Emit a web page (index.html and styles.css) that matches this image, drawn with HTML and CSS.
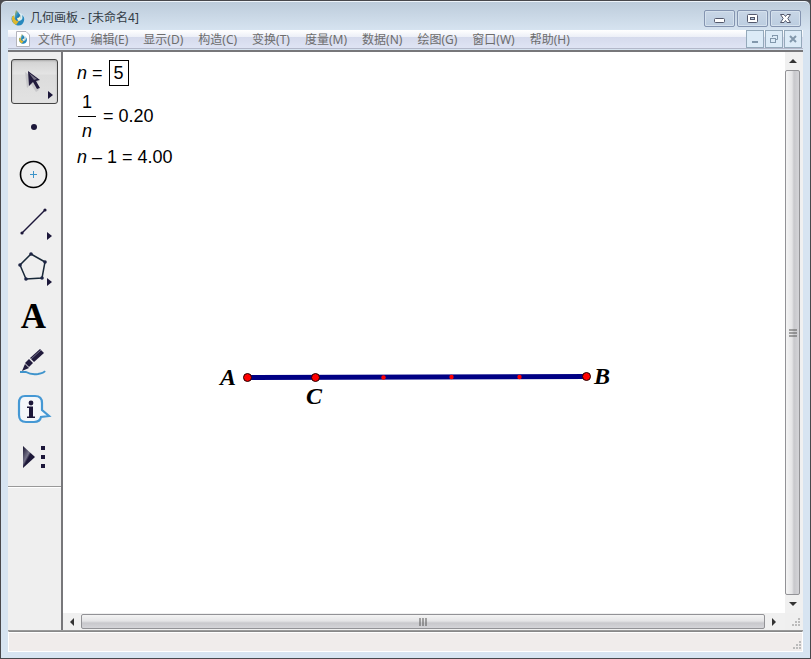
FILE: index.html
```
<!DOCTYPE html>
<html lang="zh-CN">
<head>
    <meta charset="UTF-8">
    <meta name="viewport" content="width=device-width, initial-scale=1.0">
    <title>几何画板 - [未命名4]</title>
    <link rel="stylesheet" href="styles.css">
</head>
<body>
    <svg class="defs" width="0" height="0" aria-hidden="true">
        <defs>
            <linearGradient id="drop" x1="0" y1="0" x2="1" y2="1">
                <stop offset="0" stop-color="#e8c43c"/>
                <stop offset="0.45" stop-color="#2a8fc4"/>
                <stop offset="1" stop-color="#0c4a80"/>
            </linearGradient>
            <linearGradient id="play" x1="0" y1="0" x2="1" y2="1">
                <stop offset="0" stop-color="#16122e"/>
                <stop offset="0.4" stop-color="#77758a"/>
                <stop offset="0.5" stop-color="#1d1838"/>
            </linearGradient>
            <symbol id="logo" viewBox="0 0 16 16">
                <circle cx="8" cy="9" r="6.5" fill="#d6ebf4"/>
                <path d="M2 6Q0 12 6 15Q12 17 14 11Q15 7 12 5Q14 10 9 11Z" fill="#2688bd"/>
                <path d="M2 7Q1 12 6 15L9 11Q5 12 4 5Z" fill="#deb82f"/>
                <path d="M6 0Q12 5 10 9Q8 12 5 9Q4 6 6 0Z" fill="url(#drop)"/>
                <path d="M7 8Q10 8 10 5Q12 9 8 11Z" fill="#fff9c8"/>
            </symbol>
        </defs>
    </svg>

    <div class="window">
        <header class="titlebar">
            <svg class="logo" width="16" height="18"><use href="#logo" width="16" height="18"/></svg>
            <h1>几何画板 - [未命名4]</h1>
            <div class="window-buttons">
                <button type="button" aria-label="最小化">
                    <svg width="14" height="12"><rect x="1.5" y="6.5" width="10" height="4" rx="1" fill="#fff" stroke="#53586c"/></svg>
                </button>
                <button type="button" aria-label="最大化">
                    <svg width="14" height="12"><rect x="1.5" y="2.5" width="10" height="8" rx="1" fill="#fff" stroke="#53586c"/><rect x="4.5" y="5.5" width="4" height="2" fill="#b9cbe0" stroke="#53586c"/></svg>
                </button>
                <button type="button" aria-label="关闭">
                    <svg width="14" height="12"><path d="M1.5 2.5H5L6.5 4.5L8 2.5H11.5L8.8 6.5L11.5 10.5H8L6.5 8.5L5 10.5H1.5L4.2 6.5Z" fill="#fff" stroke="#53586c"/></svg>
                </button>
            </div>
        </header>

        <div class="menubar">
            <svg class="doc-icon" width="14" height="16">
                <path d="M0.5 0.5H10L13.5 4V15.5H0.5Z" fill="#fff" stroke="#b4b4bc"/>
                <use href="#logo" x="2" y="3" width="10" height="10"/>
            </svg>
            <nav>
                <button type="button">文件(F)</button>
                <button type="button">编辑(E)</button>
                <button type="button">显示(D)</button>
                <button type="button">构造(C)</button>
                <button type="button">变换(T)</button>
                <button type="button">度量(M)</button>
                <button type="button">数据(N)</button>
                <button type="button">绘图(G)</button>
                <button type="button">窗口(W)</button>
                <button type="button">帮助(H)</button>
            </nav>
            <div class="doc-buttons">
                <button type="button" aria-label="最小化文档">
                    <svg width="10" height="10"><path d="M2 8H8" stroke="#8298ac" stroke-width="2"/></svg>
                </button>
                <button type="button" aria-label="还原文档">
                    <svg width="10" height="10" fill="none" stroke="#8298ac"><path d="M3.5 3V1.5H8.5V5.5H7M3 1.5H9M1 4.5H7"/><rect x="1.5" y="4.5" width="5" height="4"/></svg>
                </button>
                <button type="button" aria-label="关闭文档">
                    <svg width="10" height="10"><path d="M2 2L8 8M8 2L2 8" stroke="#8298ac" stroke-width="2"/></svg>
                </button>
            </div>
        </div>

        <main>
            <aside class="toolbox">
                <div class="tools">
                    <button type="button" class="tool active" aria-label="移动箭头工具">
                        <svg width="45" height="43">
                            <path d="M13 12L15 28L19 24L24 32L27 30L23 23L27 22Z" fill="#b5b5ba" opacity="0.6"/>
                            <path d="M16 11L17 26L21 22L25 29L28 28L24 21L28 20Z" fill="#211b3c"/>
                            <path d="M17 13L25 19L22 20Z" fill="#777486"/>
                            <path d="M36 31L41 35L36 39Z" fill="#1c173a"/>
                        </svg>
                    </button>
                    <button type="button" class="tool" aria-label="点工具">
                        <svg width="47" height="45"><circle cx="23" cy="21" r="3" fill="#1c173a"/></svg>
                    </button>
                    <button type="button" class="tool" aria-label="圆工具">
                        <svg width="47" height="45"><circle cx="22.5" cy="21.5" r="13" fill="none" stroke="#000" stroke-width="1.6"/><path d="M19 21.5H26M22.5 18V25" stroke="#3d94c8"/></svg>
                    </button>
                    <button type="button" class="tool" aria-label="线段直尺工具">
                        <svg width="47" height="45"><path d="M11 33L34 10" stroke="#1c173a" stroke-width="1.5"/><circle cx="11" cy="33" r="1.6" fill="#1c173a"/><circle cx="34" cy="10" r="1.6" fill="#1c173a"/><path d="M36 32L41 36L36 40Z" fill="#1c173a"/></svg>
                    </button>
                    <button type="button" class="tool" aria-label="多边形工具">
                        <svg width="47" height="45">
                            <path d="M20 7L34 15L31 31L15 32L9 18Z" fill="none" stroke="#182838" stroke-width="1.5"/>
                            <g fill="#1c2444"><circle cx="20" cy="7" r="1.8"/><circle cx="34" cy="15" r="1.8"/><circle cx="31" cy="31" r="1.8"/><circle cx="15" cy="32" r="1.8"/><circle cx="9" cy="18" r="1.8"/></g>
                            <path d="M36 31L41 35L36 39Z" fill="#1c173a"/>
                        </svg>
                    </button>
                    <button type="button" class="tool letter">A</button>
                    <button type="button" class="tool" aria-label="标记工具">
                        <svg width="47" height="45">
                            <path d="M9 31H15Q20 34 27 33Q33 32 34 30" fill="none" stroke="#3f94cc" stroke-width="1.8"/>
                            <path d="M11 30L14 23L18 27Z" fill="#211b3c"/>
                            <path d="M14 22L18 18L22 22L18 26Z" fill="#211b3c"/>
                            <path d="M19 17L29 8L33 12L23 21Z" fill="#211b3c"/>
                            <path d="M20 18L30 9" stroke="#716e88"/>
                        </svg>
                    </button>
                    <button type="button" class="tool" aria-label="信息工具">
                        <svg width="47" height="45">
                            <path d="M14 8H24Q31 8 31 15V22L38 28L30 29Q29 34 23 34H15Q8 34 8 27V15Q8 8 14 8Z" fill="#f4f7fa" stroke="#4598d4" stroke-width="2.2"/>
                            <circle cx="20" cy="15" r="2.4" fill="#1c173a"/>
                            <path d="M16 18.5H22V28.500H24V30H16V28.5H18V20H16Z" fill="#1c173a"/>
                        </svg>
                    </button>
                    <button type="button" class="tool" aria-label="自定义工具">
                        <svg width="47" height="45"><path d="M12 11L24 22L12 33Z" fill="url(#play)"/><path d="M30 11h4v4h-4ZM30 20h4v4h-4ZM30 29h4v4h-4Z" fill="#1c173a"/></svg>
                    </button>
                </div>
            </aside>

            <div class="view">
                <section class="sketch">
                    <div class="measures">
                        <div class="measure">
                            <label for="param"><i>n</i> =</label>
                            <input id="param" type="text" value="5">
                        </div>
                        <div class="measure ratio">
                            <span class="fraction"><span>1</span><i>n</i></span>
                            <span>= 0.20</span>
                        </div>
                        <div class="measure"><span><i>n</i> – 1 = 4.00</span></div>
                    </div>
                    <svg class="figure" width="400" height="60" role="img" aria-label="线段 AB">
                        <path d="M30 27.5L369 26.5" stroke="#000084" stroke-width="5"/>
                        <g fill="#f00">
                            <circle cx="165.5" cy="27.5" r="2.2"/>
                            <circle cx="233.5" cy="27" r="2.2"/>
                            <circle cx="301.5" cy="27" r="2.2"/>
                        </g>
                        <g fill="#f00" stroke="#200000">
                            <circle cx="29.5" cy="27.5" r="4"/>
                            <circle cx="97.5" cy="27.5" r="4"/>
                            <circle cx="368.5" cy="26.5" r="4"/>
                        </g>
                        <text x="2" y="35">A</text>
                        <text x="88" y="54">C</text>
                        <text x="376" y="34">B</text>
                    </svg>
                </section>

                <div class="scrollbar vertical">
                    <button type="button" aria-label="向上滚动"><svg width="8" height="4"><path d="M0 4L4 0L8 4Z" fill="#333"/></svg></button>
                    <div class="thumb"><svg width="8" height="8"><path d="M0 1H8M0 4H8M0 7H8" stroke="#555"/></svg></div>
                    <button type="button" aria-label="向下滚动"><svg width="8" height="4"><path d="M0 0L4 4L8 0Z" fill="#333"/></svg></button>
                </div>
                <div class="scrollbar horizontal">
                    <button type="button" aria-label="向左滚动"><svg width="4" height="8"><path d="M4 0L0 4L4 8Z" fill="#333"/></svg></button>
                    <div class="thumb"><svg width="8" height="8"><path d="M1 0V8M4 0V8M7 0V8" stroke="#555"/></svg></div>
                    <button type="button" aria-label="向右滚动"><svg width="4" height="8"><path d="M0 0L4 4L0 8Z" fill="#333"/></svg></button>
                </div>
                <div class="corner">
                    <svg class="grip" width="10" height="10"><path d="M7 0h2v2h-2ZM4 3h2v2h-2ZM7 3h2v2h-2ZM1 6h2v2h-2ZM4 6h2v2h-2ZM7 6h2v2h-2Z" fill="#bbb"/></svg>
                </div>
            </div>
        </main>

        <footer class="statusbar">
            <svg class="grip" width="10" height="10"><path d="M7 0h2v2h-2ZM4 3h2v2h-2ZM7 3h2v2h-2ZM1 6h2v2h-2ZM4 6h2v2h-2ZM7 6h2v2h-2Z" fill="#bbb"/></svg>
        </footer>
    </div>
</body>
</html>
```
FILE: styles.css
```
* {
    box-sizing: border-box;
}
body {
    margin: 0;
    background-color: #4b4b4f;
    font-family: "Noto Sans", "Noto Sans CJK SC", sans-serif;
    font-size: 12px;
}
button {
    margin: 0;
    padding: 0;
    border: 0;
    background: none;
    font: inherit;
    color: inherit;
}
svg {
    display: block;
    flex: none;
}
.defs {
    position: absolute;
}
.window {
    display: flex;
    flex-direction: column;
    height: 100vh;
    padding: 0 7px 6px;
    border: 1px solid #48484c;
    border-radius: 6px 6px 0 0;
    background: linear-gradient(#bccbda, #d7e4f1 30px);
    box-shadow: inset 0 1px #eef4fa;
}

/* Title bar */
.titlebar {
    display: flex;
    flex: none;
    align-items: center;
    height: 29px;
    padding: 5px 2px 0;
}
.titlebar h1 {
    flex: 1;
    margin: 0 4px;
    font-size: 12px;
    font-weight: normal;
    line-height: 18px;
    color: #333b44;
}
.window-buttons {
    display: flex;
    gap: 2px;
}
.window-buttons button {
    display: flex;
    align-items: center;
    justify-content: center;
    width: 31px;
    height: 17px;
    border: 1px solid #8494b0;
    border-radius: 2px;
    background: linear-gradient(#c8d6e6, #bccde0);
    box-shadow: inset 0 0 0 1px #d5e1ed;
}

/* Menu bar */
.menubar {
    display: flex;
    flex: none;
    align-items: center;
    height: 19px;
    padding: 0 1px 0 8px;
    border-bottom: 1px solid #b3b8ca;
    background: linear-gradient(#fff, #eceff7 7px, #d5daec 7px, #dfe4f4);
    color: #6d6d6d;
}
.menubar nav {
    display: flex;
    flex: 1;
    gap: 15px;
    padding: 1px 0 0 8px;
}
.menubar nav button {
    line-height: 18px;
    white-space: nowrap;
}
.doc-buttons {
    display: flex;
    gap: 1px;
}
.doc-buttons button {
    display: flex;
    align-items: center;
    justify-content: center;
    width: 18px;
    height: 18px;
    border: 1px solid #94a9ba;
    background-color: #dcebf7;
}

/* Work area */
main {
    display: flex;
    flex: 1;
    min-height: 0;
    margin-top: 1px;
    border-top: 2px solid #77777a;
    border-bottom: 1px solid #999;
    background-color: #efefef;
}
.toolbox {
    flex: none;
    width: 55px;
    border-right: 2px solid #77777a;
}
.tools {
    display: flex;
    flex-direction: column;
    gap: 2px;
    padding: 7px 3px 6px;
    border-bottom: 1px solid #999;
    box-shadow: 0 1px #fff;
}
.tool {
    display: flex;
    align-items: center;
    justify-content: center;
    width: 47px;
    height: 45px;
}
.tool.active {
    border: 1px solid #444;
    border-radius: 3px;
    background: linear-gradient(#d2d2d2, #e4e4e4 14px, #dcdcdc 15px, #e2e2e2);
    box-shadow: inset 0 1px 2px #aaa;
}
.tool.letter {
    padding-right: 2px;
    font-family: "Liberation Serif", serif;
    font-size: 35px;
    font-weight: bold;
    color: #000;
}
.view {
    display: grid;
    flex: 1;
    grid-template-columns: 1fr 18px;
    grid-template-rows: 1fr 17px;
    min-width: 0;
}
.sketch {
    position: relative;
    overflow: hidden;
    background-color: #fff;
}
.measures {
    padding: 8px 14px;
    font-family: "Liberation Sans", Arial, sans-serif;
    font-size: 18px;
    line-height: 26px;
    color: #000;
}
.measure {
    display: flex;
    align-items: center;
    gap: 6px;
}
.measure input {
    width: 20px;
    height: 26px;
    padding: 0;
    border: 1px solid #000;
    background-color: #fff;
    font: inherit;
    text-align: center;
    color: #000;
}
.ratio {
    height: 58px;
    padding-top: 2px;
}
.fraction {
    display: flex;
    flex-direction: column;
    align-items: center;
    width: 20px;
    line-height: 28px;
}
.fraction i {
    width: 18px;
    border-top: 1px solid #000;
    text-align: center;
}

/* Geometry placed freely on the sketch plane */
.figure {
    position: absolute;
    left: 155px;
    top: 298px;
}
.figure text {
    font-family: "Liberation Serif", "Times New Roman", serif;
    font-size: 24px;
    font-style: italic;
    font-weight: bold;
}

/* Scroll bars */
.scrollbar {
    display: flex;
    background-color: #f0f0f0;
}
.scrollbar button,
.thumb {
    display: flex;
    align-items: center;
    justify-content: center;
}
.scrollbar button {
    flex: none;
    width: 18px;
    height: 18px;
}
.thumb {
    flex: 1;
    border: 1px solid #929296;
    border-radius: 2px;
}
.vertical {
    flex-direction: column;
    padding-right: 3px;
}
.vertical button {
    width: 15px;
}
.vertical .thumb {
    background: linear-gradient(90deg, #f4f4f4, #e4e4e6 6px, #c8c8cc 8px, #d4d4d8);
}
.horizontal {
    padding: 1px 2px 1px 0;
}
.horizontal button {
    height: 15px;
}
.horizontal .thumb {
    background: linear-gradient(#f4f4f4, #e4e4e6 6px, #c8c8cc 8px, #d4d4d8);
}
.corner {
    display: flex;
    align-items: flex-end;
    justify-content: flex-end;
    padding: 2px;
}

/* Status bar */
.statusbar {
    display: flex;
    flex: none;
    align-items: flex-end;
    justify-content: flex-end;
    height: 21px;
    border: 1px solid #fff;
    border-top: 1px solid #888;
    background-color: #f0eceb;
    box-shadow: inset 0 1px #fff;
}
```
